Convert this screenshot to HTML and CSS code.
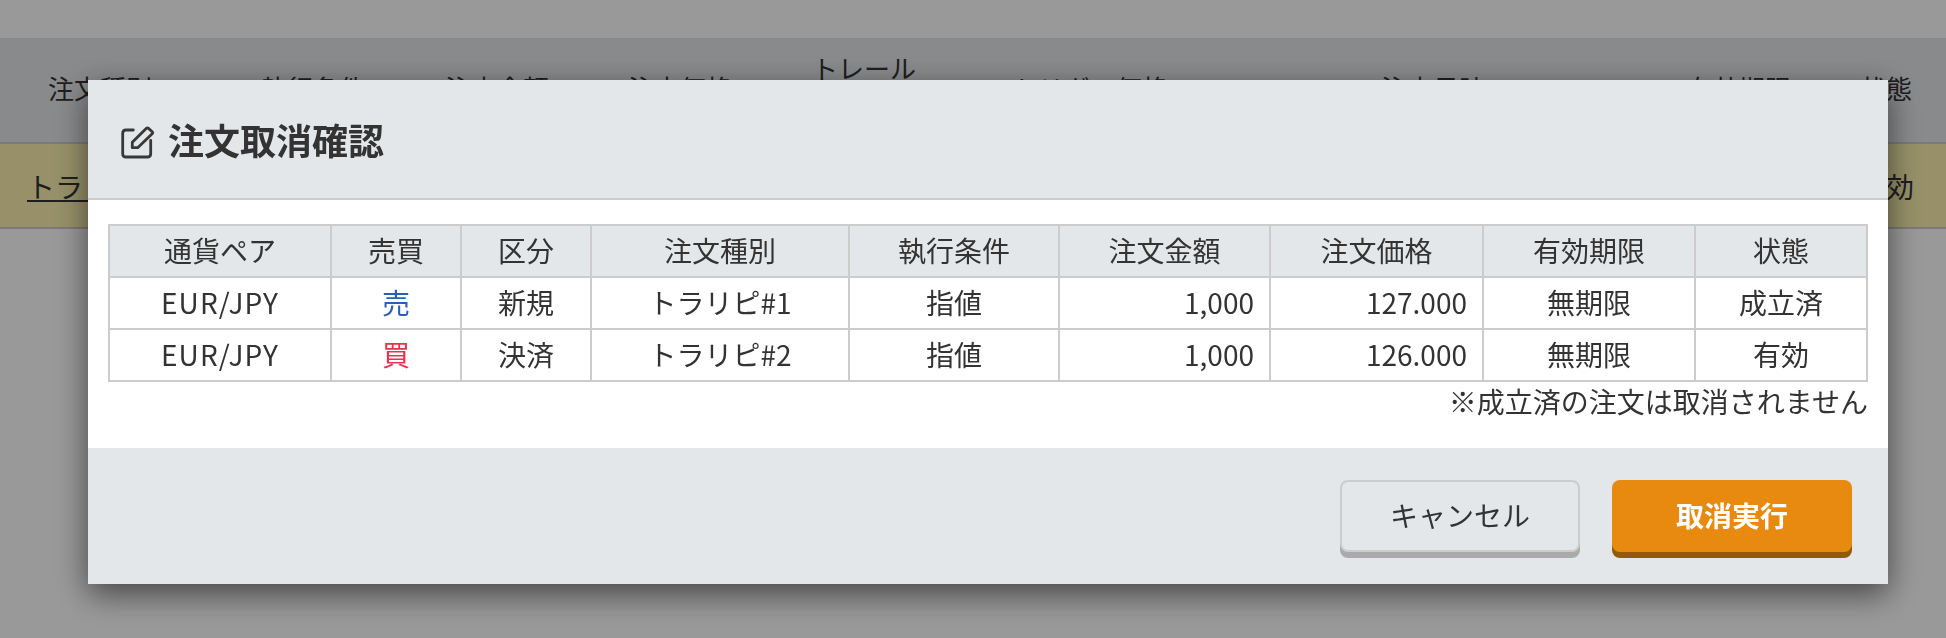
FILE: index.html
```html
<!DOCTYPE html>
<html lang="ja">
<head>
<meta charset="utf-8">
<title>注文取消確認</title>
<link rel="stylesheet" href="styles.css">
</head>
<body>
<main class="page">
  <table class="orders">
    <colgroup>
      <col class="oc1"><col class="oc2"><col class="oc3"><col class="oc4"><col class="oc5"><col class="oc6"><col class="oc7"><col class="oc8"><col class="oc9">
    </colgroup>
    <thead>
      <tr>
        <th class="first">注文種別</th><th>執行条件</th><th>注文金額</th><th>注文価格</th><th>トレール<br>幅</th><th>トリガー価格</th><th>注文日時</th><th>有効期限</th><th>状態</th>
      </tr>
    </thead>
    <tbody>
      <tr>
        <td class="link"><a href="#">トラリピ#1</a></td><td>指値</td><td>1,000</td><td>127.000</td><td>-</td><td>-</td><td>-</td><td>無期限</td><td>有効</td>
      </tr>
    </tbody>
  </table>
</main>
<div class="overlay"></div>
<section class="modal">
  <header class="modal-head">
    <svg class="edit-icon" viewBox="0 0 36 36" width="36" height="36" fill="none" stroke="#383838" stroke-width="2.8" stroke-linecap="round" stroke-linejoin="round" aria-hidden="true">
      <path d="M13.3 7H6Q2.7 7 2.7 10.3V30.7Q2.7 34 6 34H27.3Q30.7 34 30.7 30.7V17.3"/>
      <path d="M12.3 24.7V19.3L26.2 5.4Q27.3 4.3 28.5 5.4L32.2 8.7Q33.3 9.7 32.2 10.8L17.7 24.7Z"/>
    </svg>
    <h1 class="modal-title">注文取消確認</h1>
  </header>
  <div class="modal-body">
    <table class="confirm">
      <colgroup>
        <col class="c1"><col class="c2"><col class="c3"><col class="c4"><col class="c5"><col class="c6"><col class="c7"><col class="c8"><col class="c9">
      </colgroup>
      <thead>
        <tr><th>通貨ペア</th><th>売買</th><th>区分</th><th>注文種別</th><th>執行条件</th><th>注文金額</th><th>注文価格</th><th>有効期限</th><th>状態</th></tr>
      </thead>
      <tbody>
        <tr><td class="pair">EUR/JPY</td><td class="sell">売</td><td>新規</td><td>トラリピ#1</td><td>指値</td><td class="num">1,000</td><td class="num">127.000</td><td>無期限</td><td>成立済</td></tr>
        <tr><td class="pair">EUR/JPY</td><td class="buy">買</td><td>決済</td><td>トラリピ#2</td><td>指値</td><td class="num">1,000</td><td class="num">126.000</td><td>無期限</td><td>有効</td></tr>
      </tbody>
    </table>
    <p class="note">※成立済の注文は取消されません</p>
  </div>
  <footer class="modal-foot">
    <button class="btn btn-cancel" type="button">キャンセル</button>
    <button class="btn btn-run" type="button">取消実行</button>
  </footer>
</section>
</body>
</html>
```
FILE: styles.css
```css
* { box-sizing: border-box; }
html, body { margin: 0; padding: 0; height: 100%; overflow: hidden; }
body {
  background: #fff;
  color: #333;
  font-family: "Noto Sans CJK JP", "Noto Sans", sans-serif;
  font-size: 28px;
}
.page { padding-top: 38px; }
.orders { width: 1946px; table-layout: fixed; border-collapse: collapse; }
.oc1 { width: 230px; } .oc2 { width: 166px; } .oc3 { width: 202px; }
.oc4 { width: 164px; } .oc5 { width: 204px; } .oc6 { width: 248px; }
.oc7 { width: 438px; } .oc8 { width: 174px; } .oc9 { width: 120px; }
.orders th {
  height: 105px;
  padding: 0 0 4px;
  font-size: 26px;
  font-weight: 400;
  line-height: 40px;
  white-space: nowrap;
  background: #e4e6e9;
  border-bottom: 2px solid #ccc;
  vertical-align: middle;
}
.orders th.first { text-align: left; padding-left: 48px; }
.orders td {
  height: 85px;
  padding: 0;
  text-align: center;
  background: #fcf1b0;
  border-bottom: 2px solid #ccc;
}
.orders td.link { text-align: left; padding-left: 27px; }
.orders a { color: #333; }
.overlay { position: fixed; inset: 0; background: rgba(0,0,0,.4); }
.modal {
  position: fixed;
  left: 88px;
  top: 80px;
  width: 1800px;
  height: 504px;
  display: flex;
  flex-direction: column;
  background: #fff;
  box-shadow: 0 10px 30px rgba(0,0,0,.55);
}
.modal-head {
  height: 120px;
  flex: none;
  display: flex;
  align-items: center;
  gap: 12px;
  padding-left: 32px;
  background: #e3e7ea;
  border-bottom: 2px solid #ccc;
}
.edit-icon { flex: none; margin-top: 4px; }
.modal-title { margin: 0; font-size: 36px; line-height: 48px; font-weight: 700; color: #333; }
.modal-body { flex: 1; padding: 24px 20px 0; }
.confirm { width: 1758px; table-layout: fixed; border-collapse: collapse; }
.c1 { width: 222px; } .c2 { width: 130px; } .c3 { width: 130px; }
.c4 { width: 258px; } .c5 { width: 210px; } .c6 { width: 211px; }
.c7 { width: 213px; } .c8 { width: 212px; } .c9 { width: 172px; }
.confirm th, .confirm td {
  height: 52px;
  padding: 0 0 2px;
  border: 2px solid #ccc;
  font-size: 28px;
  font-weight: 400;
  line-height: 40px;
  text-align: center;
  white-space: nowrap;
}
.confirm th { background: #e3e7ea; }
.confirm td.num { text-align: right; padding-right: 15px; }
.confirm td.pair { letter-spacing: 1.1px; }
.confirm td.sell { color: #2b5fb5; }
.confirm td.buy { color: #e8334e; }
.note { margin: 0; line-height: 38px; text-align: right; }
.modal-foot {
  height: 136px;
  flex: none;
  display: flex;
  justify-content: flex-end;
  gap: 32px;
  padding: 32px 36px 0 0;
  background: #e3e7ea;
}
.btn {
  width: 240px;
  height: 72px;
  border-radius: 8px;
  font: inherit;
  padding: 0 0 3px;
  cursor: pointer;
}
.btn-cancel {
  color: #333;
  background: #e3e7ea;
  border: 2px solid #ccc;
  box-shadow: 0 6px 0 #aaa;
}
.btn-run {
  color: #fff;
  font-weight: 700;
  background: #e88a10;
  border: none;
  box-shadow: 0 6px 0 #8f5d08;
}
```
